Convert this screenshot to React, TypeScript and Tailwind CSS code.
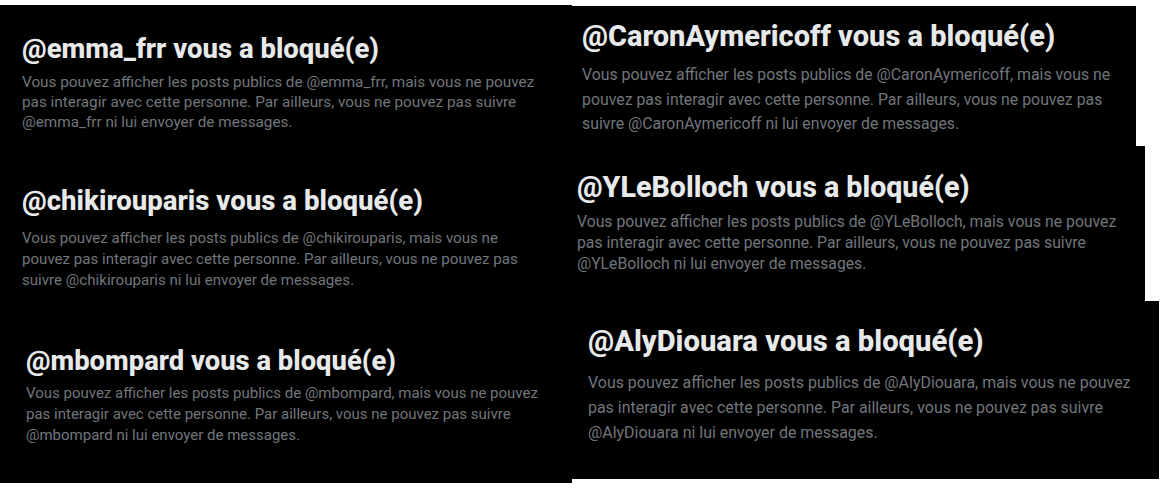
import React from "react";

const font = { fontFamily: "Roboto, 'Noto Sans', sans-serif" };

export default function App() {
  return (
    <div className="w-[1161px] h-[492px] bg-white overflow-hidden flex" style={font}>
      {/* Left column */}
      <div className="mt-[5px] w-[572px] h-[478px] bg-black flex flex-col">
        <div className="pl-[22px] pt-[27px]">
          <h2 className="text-[27.5px] leading-[34px] font-extrabold text-[#e7e9ea] whitespace-nowrap">@emma_frr vous a bloqué(e)</h2>
          <p className="mt-[6px] text-[15.3px] leading-[20px] text-[#71767b] whitespace-nowrap">
            Vous pouvez afficher les posts publics de @emma_frr, mais vous ne pouvez<br />
            pas interagir avec cette personne. Par ailleurs, vous ne pouvez pas suivre<br />
            @emma_frr ni lui envoyer de messages.
          </p>
        </div>
        <div className="pl-[22px] pt-[52px]">
          <h2 className="text-[27.6px] leading-[34px] font-extrabold text-[#e7e9ea] whitespace-nowrap">@chikirouparis vous a bloqué(e)</h2>
          <p className="mt-[10px] text-[15.1px] leading-[21px] text-[#71767b] whitespace-nowrap">
            Vous pouvez afficher les posts publics de @chikirouparis, mais vous ne<br />
            pouvez pas interagir avec cette personne. Par ailleurs, vous ne pouvez pas<br />
            suivre @chikirouparis ni lui envoyer de messages.
          </p>
        </div>
        <div className="pl-[26px] pt-[53px]">
          <h2 className="text-[27.4px] leading-[34px] font-extrabold text-[#e7e9ea] whitespace-nowrap">@mbompard vous a bloqué(e)</h2>
          <p className="mt-[5px] text-[15px] leading-[21px] text-[#71767b] whitespace-nowrap">
            Vous pouvez afficher les posts publics de @mbompard, mais vous ne pouvez<br />
            pas interagir avec cette personne. Par ailleurs, vous ne pouvez pas suivre<br />
            @mbompard ni lui envoyer de messages.
          </p>
        </div>
      </div>

      {/* Right column */}
      <div className="mt-[6px] flex flex-col">
        <div className="w-[564px] h-[140px] bg-black pl-[10px] pt-[12px]">
          <h2 className="text-[29px] leading-[36px] font-extrabold text-[#e7e9ea] whitespace-nowrap">@CaronAymericoff vous a bloqué(e)</h2>
          <p className="mt-[9px] text-[15.85px] leading-[24.5px] text-[#71767b] whitespace-nowrap">
            Vous pouvez afficher les posts publics de @CaronAymericoff, mais vous ne<br />
            pouvez pas interagir avec cette personne. Par ailleurs, vous ne pouvez pas<br />
            suivre @CaronAymericoff ni lui envoyer de messages.
          </p>
        </div>
        <div className="w-[573px] h-[155px] bg-black pl-[5px] pt-[24px]">
          <h2 className="text-[28.6px] leading-[34px] font-extrabold text-[#e7e9ea] whitespace-nowrap">@YLeBolloch vous a bloqué(e)</h2>
          <p className="mt-[7px] text-[15.75px] leading-[21px] text-[#71767b] whitespace-nowrap">
            Vous pouvez afficher les posts publics de @YLeBolloch, mais vous ne pouvez<br />
            pas interagir avec cette personne. Par ailleurs, vous ne pouvez pas suivre<br />
            @YLeBolloch ni lui envoyer de messages.
          </p>
        </div>
        <div className="w-[587px] h-[178px] bg-black pl-[16px] pt-[22px]">
          <h2 className="text-[29.2px] leading-[36px] font-extrabold text-[#e7e9ea] whitespace-nowrap">@AlyDiouara vous a bloqué(e)</h2>
          <p className="mt-[11px] text-[15.95px] leading-[25px] text-[#71767b] whitespace-nowrap">
            Vous pouvez afficher les posts publics de @AlyDiouara, mais vous ne pouvez<br />
            pas interagir avec cette personne. Par ailleurs, vous ne pouvez pas suivre<br />
            @AlyDiouara ni lui envoyer de messages.
          </p>
        </div>
      </div>
    </div>
  );
}
